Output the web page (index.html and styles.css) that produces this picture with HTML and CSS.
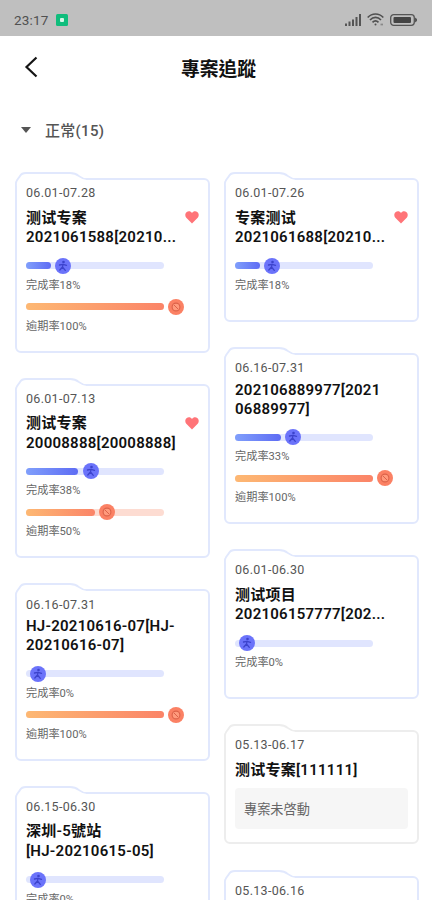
FILE: index.html
```
<!DOCTYPE html>
<html lang="zh-Hant">
<head>
    <meta charset="UTF-8">
    <meta name="viewport" content="width=device-width, initial-scale=1.0">
    <title>專案追蹤</title>
    <link rel="stylesheet" href="styles.css">
</head>
<body>
    <!-- shared icons -->
    <svg class="defs" width="0" height="0">
        <symbol id="tab" viewBox="0 0 74 14">
            <path d="M1 14 V11 C1 8 4 6 5 4 C6 2 8 1 11 1 H55 C65 1 63 6.500 71 7 V9 H66 V14 Z" fill="#fff"/>
            <path d="M1 14 V11 C1 8 4 6 5 4 C6 2 8 1 11 1 H55 C65 1 63 7 72 7" fill="none" stroke="currentColor" stroke-width="1.800"/>
        </symbol>
        <symbol id="heart" viewBox="0 0 14 13">
            <path d="M7 12.500 L1.300 6.800 C-.2 5.200 0 2.500 1.500 1.200 C3.200-.3 5.800 0 7 2 C8.200 0 10.800-.3 12.500 1.200 C14 2.500 14.200 5.200 12.700 6.800 Z" fill="#ff7478"/>
        </symbol>
        <symbol id="run" viewBox="0 0 16 16">
            <circle cx="8" cy="8" r="8" fill="#6b73fa"/>
            <circle cx="8.500" cy="4" r="1.300" fill="#3c43cc"/>
            <path d="M4.500 7 L8 6.300 L11.500 7.300 M8 6.300 L7.500 9 L10.300 12.300 M7.500 9 L4.800 12" fill="none" stroke="#3c43cc" stroke-width="1.300" stroke-linecap="round" stroke-linejoin="round"/>
        </symbol>
        <symbol id="late" viewBox="0 0 16 16">
            <circle cx="8" cy="8" r="8" fill="#fb8164"/>
            <circle cx="8" cy="8" r="3.900" fill="#ff9a7c" stroke="#dc6249" stroke-width="1.100"/>
            <path d="M6 6 L10 10" stroke="#dc6249" stroke-width="1"/>
        </symbol>
    </svg>

    <div class="status-bar">
        <span class="time">23:17</span>
        <svg class="app-icon" width="12" height="12" viewBox="0 0 12 12">
            <rect width="12" height="12" rx="1.500" fill="#0fbd7c"/>
            <rect x="4" y="4" width="4" height="4" rx="1" fill="#d5f7e8"/>
        </svg>
        <svg class="signal" width="17" height="12" viewBox="0 0 17 12" fill="#555">
            <rect x="0" y="9.500" width="2" height="2.500"/>
            <rect x="3.500" y="7.500" width="2" height="4.500"/>
            <rect x="7" y="5.500" width="2" height="6.500"/>
            <rect x="10.500" y="3" width="2" height="9"/>
            <rect x="14" y="0" width="2" height="12"/>
        </svg>
        <svg class="wifi" width="17" height="13" viewBox="0 0 17 13" fill="none" stroke="#505050" stroke-width="1.700">
            <path d="M.7 4.500 C5-.2 12-.2 16.300 4.500"/>
            <path d="M3 7 C6.300 3.600 10.700 3.600 14 7"/>
            <path d="M5.500 9.300 C7.300 7.500 9.700 7.500 11.500 9.300"/>
            <circle cx="8.500" cy="11.500" r="1" fill="#505050" stroke="none"/>
            <path d="M13.500 11.500 H16" stroke="#888"/>
        </svg>
        <svg class="battery" width="27" height="12" viewBox="0 0 27 12">
            <rect x=".7" y=".7" width="23.600" height="10.600" rx="3" fill="none" stroke="#555" stroke-width="1.300"/>
            <rect x="3.500" y="3" width="17.500" height="6" rx="1" fill="#444"/>
            <path d="M25 3.500 L27 5 V7 L25 8.500 Z" fill="#555"/>
        </svg>
    </div>

    <header class="nav">
        <svg class="back" width="14" height="22" viewBox="0 0 14 22">
            <path d="M12.500 1.500 L2.500 11 L12.500 20.500" fill="none" stroke="#151515" stroke-width="2.200"/>
        </svg>
        <h1>專案追蹤</h1>
    </header>

    <div class="group">
        <span class="arrow"></span>
        <span>正常(15)</span>
    </div>

    <main class="board">
        <!-- left column -->
        <div class="column">
            <section class="card">
                <svg class="tab"><use href="#tab"/></svg>
                <div class="date">06.01-07.28</div>
                <h2><span class="cjk">测试专案</span><span>2021061588[20210...</span></h2>
                <svg class="heart"><use href="#heart"/></svg>
                <div class="bar done"><div class="fill" style="width: 18%"></div><svg class="knob"><use href="#run"/></svg></div>
                <p>完成率18%</p>
                <div class="bar overdue"><div class="fill" style="width: 100%"></div><svg class="knob"><use href="#late"/></svg></div>
                <p>逾期率100%</p>
            </section>

            <section class="card">
                <svg class="tab"><use href="#tab"/></svg>
                <div class="date">06.01-07.13</div>
                <h2><span class="cjk">测试专案</span><span>20008888[20008888]</span></h2>
                <svg class="heart"><use href="#heart"/></svg>
                <div class="bar done"><div class="fill" style="width: 38%"></div><svg class="knob"><use href="#run"/></svg></div>
                <p>完成率38%</p>
                <div class="bar overdue"><div class="fill" style="width: 50%"></div><svg class="knob"><use href="#late"/></svg></div>
                <p>逾期率50%</p>
            </section>

            <section class="card">
                <svg class="tab"><use href="#tab"/></svg>
                <div class="date">06.16-07.31</div>
                <h2><span>HJ-20210616-07[HJ-</span><span>20210616-07]</span></h2>
                <div class="bar done"><div class="fill" style="width: 0%"></div><svg class="knob"><use href="#run"/></svg></div>
                <p>完成率0%</p>
                <div class="bar overdue"><div class="fill" style="width: 100%"></div><svg class="knob"><use href="#late"/></svg></div>
                <p>逾期率100%</p>
            </section>

            <section class="card">
                <svg class="tab"><use href="#tab"/></svg>
                <div class="date">06.15-06.30</div>
                <h2><span class="cjk">深圳-5號站</span><span>[HJ-20210615-05]</span></h2>
                <div class="bar done"><div class="fill" style="width: 0%"></div><svg class="knob"><use href="#run"/></svg></div>
                <p>完成率0%</p>
            </section>
        </div>

        <!-- right column -->
        <div class="column">
            <section class="card single">
                <svg class="tab"><use href="#tab"/></svg>
                <div class="date">06.01-07.26</div>
                <h2><span class="cjk">专案测试</span><span>2021061688[20210...</span></h2>
                <svg class="heart"><use href="#heart"/></svg>
                <div class="bar done"><div class="fill" style="width: 18%"></div><svg class="knob"><use href="#run"/></svg></div>
                <p>完成率18%</p>
            </section>

            <section class="card">
                <svg class="tab"><use href="#tab"/></svg>
                <div class="date">06.16-07.31</div>
                <h2><span>202106889977[2021</span><span>06889977]</span></h2>
                <div class="bar done"><div class="fill" style="width: 33%"></div><svg class="knob"><use href="#run"/></svg></div>
                <p>完成率33%</p>
                <div class="bar overdue"><div class="fill" style="width: 100%"></div><svg class="knob"><use href="#late"/></svg></div>
                <p>逾期率100%</p>
            </section>

            <section class="card single">
                <svg class="tab"><use href="#tab"/></svg>
                <div class="date">06.01-06.30</div>
                <h2><span class="cjk">测试项目</span><span>202106157777[202...</span></h2>
                <div class="bar done"><div class="fill" style="width: 0%"></div><svg class="knob"><use href="#run"/></svg></div>
                <p>完成率0%</p>
            </section>

            <section class="card inactive">
                <svg class="tab"><use href="#tab"/></svg>
                <div class="date">05.13-06.17</div>
                <h2><span class="cjk">测试专案[111111]</span></h2>
                <div class="notice">專案未啓動</div>
            </section>

            <section class="card single">
                <svg class="tab"><use href="#tab"/></svg>
                <div class="date">05.13-06.16</div>
            </section>
        </div>
    </main>
</body>
</html>
```
FILE: styles.css
```
* {
    box-sizing: border-box;
}
body {
    margin: 0;
    height: 900px;
    overflow: hidden;
    display: flex;
    flex-direction: column;
    background: #fff;
    color: #111;
    font-family: Roboto, "Noto Sans CJK SC", sans-serif;
}
.defs {
    position: absolute;
}

/* status bar */
.status-bar {
    flex: none;
    height: 36px;
    padding: 3px 15px 0 14px;
    display: flex;
    align-items: center;
    background: #bfbfbf;
    color: #505050;
}
.time {
    width: 42px;
    font-size: 13.5px;
    letter-spacing: 0.2px;
}
.signal {
    margin-left: auto;
}
.wifi {
    margin-left: 5px;
}
.battery {
    margin-left: 6px;
}

/* title */
.nav {
    flex: none;
    height: 62px;
    padding: 0 24px;
    display: grid;
    grid-template-columns: 14px 1fr 9px;
    align-items: center;
}
.nav h1 {
    margin: 5px 0 0;
    text-align: center;
    font-family: Roboto, "Noto Sans CJK TC", sans-serif;
    font-size: 18.8px;
    line-height: 24px;
    font-weight: 700;
}
.group {
    flex: none;
    height: 64px;
    padding: 0 21px 2px;
    display: flex;
    align-items: center;
    gap: 14px;
    font-size: 15px;
    font-weight: 500;
    letter-spacing: 0.3px;
    color: #555;
}
.arrow {
    margin-top: 2px;
    border: 5px solid transparent;
    border-top: 6px solid #555;
    border-bottom: none;
}

/* cards */
.board {
    padding: 16px 13px 0 15px;
    display: grid;
    grid-template-columns: 195px 195px;
    gap: 14px;
}
.column {
    display: flex;
    flex-direction: column;
    gap: 31.1px;
}
.card {
    position: relative;
    padding: 6.2px 9px 16.8px;
    border: 2px solid #e1e8fd;
    border-radius: 6px;
    background: #fff;
    color: #e1e8fd;
}
.card.single {
    padding-bottom: 27px;
}
.card.inactive {
    padding-bottom: 13.3px;
    border-color: #ededed;
    color: #ededed;
}
.tab {
    position: absolute;
    top: -8px;
    left: -2px;
    width: 74px;
    height: 14px;
}
.date {
    position: relative;
    height: 14px;
    margin-bottom: 5.5px;
    font-size: 12.5px;
    line-height: 14px;
    letter-spacing: 0.3px;
    color: #555;
}
h2 {
    margin: 0;
    font-size: 15px;
    font-weight: 600;
    letter-spacing: 0.25px;
    color: #111;
}
h2 span {
    display: block;
    height: 19px;
    line-height: 19px;
    white-space: nowrap;
}
h2 .cjk {
    height: 22.3px;
    line-height: 24px;
}
.heart {
    position: absolute;
    top: 31px;
    right: 9px;
    width: 14px;
    height: 13px;
}
.bar {
    position: relative;
    width: 138px;
    height: 16px;
    margin-top: 10.8px;
    display: flex;
    align-items: center;
}
.bar::before {
    content: "";
    position: absolute;
    left: 0;
    right: 0;
    height: 7px;
    border-radius: 3.5px;
    background: #e0e5fe;
}
.fill {
    position: relative;
    flex: none;
    height: 7px;
    border-radius: 3.5px;
}
.done .fill {
    background: linear-gradient(90deg, #809ffb, #5e6cf4);
}
.overdue {
    margin-top: 6px;
}
.overdue::before {
    background: #fddcd2;
}
.overdue .fill {
    background: linear-gradient(90deg, #fdb873, #fb8468);
}
.knob {
    position: relative;
    flex: none;
    width: 16px;
    height: 16px;
    margin-left: 4.4px;
}
p {
    margin: 4px 0 0;
    height: 15px;
    line-height: 15px;
    font-size: 11.2px;
    color: #666;
}
.notice {
    height: 41px;
    margin: 8px 0 0;
    padding-left: 9px;
    border-radius: 4px;
    background: #f6f6f6;
    font-size: 13.2px;
    line-height: 43px;
    color: #666;
}
```
